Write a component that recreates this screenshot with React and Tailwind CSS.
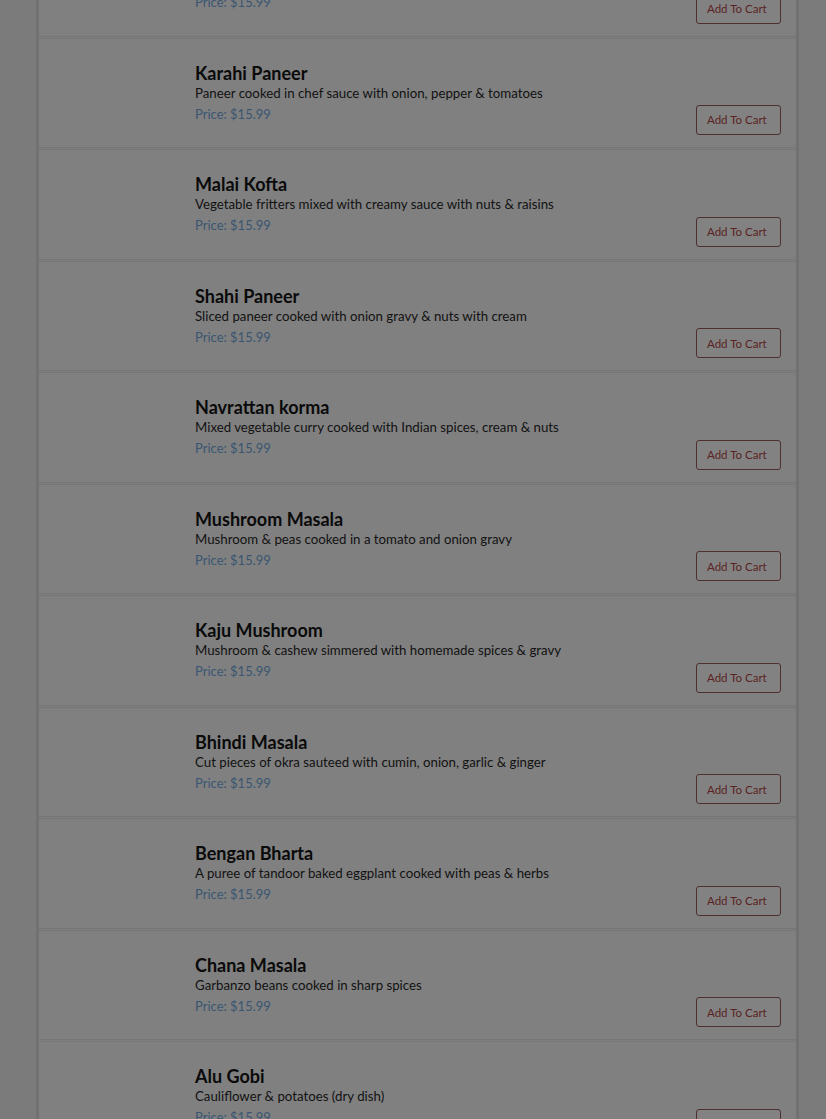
import React from "react";

const items = [
  { name: "Paneer Tikka Masala", desc: "Paneer cooked in creamy tomato sauce", price: "15.99" },
  { name: "Karahi Paneer", desc: "Paneer cooked in chef sauce with onion, pepper & tomatoes", price: "15.99" },
  { name: "Malai Kofta", desc: "Vegetable fritters mixed with creamy sauce with nuts & raisins", price: "15.99" },
  { name: "Shahi Paneer", desc: "Sliced paneer cooked with onion gravy & nuts with cream", price: "15.99" },
  { name: "Navrattan korma", desc: "Mixed vegetable curry cooked with Indian spices, cream & nuts", price: "15.99" },
  { name: "Mushroom Masala", desc: "Mushroom & peas cooked in a tomato and onion gravy", price: "15.99" },
  { name: "Kaju Mushroom", desc: "Mushroom & cashew simmered with homemade spices & gravy", price: "15.99" },
  { name: "Bhindi Masala", desc: "Cut pieces of okra sauteed with cumin, onion, garlic & ginger", price: "15.99" },
  { name: "Bengan Bharta", desc: "A puree of tandoor baked eggplant cooked with peas & herbs", price: "15.99" },
  { name: "Chana Masala", desc: "Garbanzo beans cooked in sharp spices", price: "15.99" },
  { name: "Alu Gobi", desc: "Cauliflower & potatoes (dry dish)", price: "15.99" },
];

function MenuRow({ item }) {
  return (
    <div className="flex h-[110.56px] mb-px border-y border-[#777777] bg-[#808080]">
      <div className="w-[156px] shrink-0"></div>
      <div className="flex-1 pt-[24px]">
        <h3 className="text-[18px] leading-[20px] font-bold text-[#0a0a0a]">{item.name}</h3>
        <p className="text-[13.25px] leading-[20px] text-[#121212]">{item.desc}</p>
        <p className="mt-[1px] text-[13px] leading-[21px] text-[#3a5672]">Price: ${item.price}</p>
      </div>
      <div className="flex items-end pr-[15px] pb-[12px]">
        <button className="w-[85px] h-[30px] pl-[10px] text-left border border-[#4e3030] rounded-[3px] text-[11.5px] text-[#5a2222] bg-[#828282]">
          Add To Cart
        </button>
      </div>
    </div>
  );
}

export default function App() {
  return (
    <div
      className="min-h-screen bg-[#7b7b7b] overflow-hidden"
      style={{ fontFamily: "'Source Sans Pro', Lato, 'Liberation Sans', sans-serif" }}
    >
      <div className="ml-[36px] w-[763px] -mt-[74px] border-x-[3px] border-[#717171] bg-[#7e7e7e]">
        {items.map((item) => (
          <MenuRow key={item.name} item={item} />
        ))}
      </div>
    </div>
  );
}
